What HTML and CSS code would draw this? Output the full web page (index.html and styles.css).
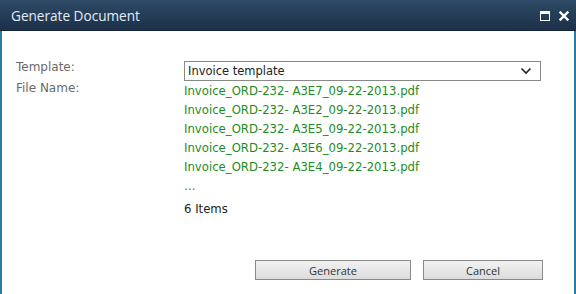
FILE: index.html
```html
<!DOCTYPE html>
<html lang="en">
<head>
  <meta charset="UTF-8" />
  <title>Generate Document</title>
  <link rel="stylesheet" href="styles.css">
</head>
<body>
  <div class="dialog">
    <header class="titlebar">
      <h1>Generate Document</h1>
      <div class="controls">
        <span class="maximize"></span>
        <svg class="close" width="10" height="10" viewBox="0 0 10 10">
          <path d="M1.5 1.5 L8.5 8.5 M8.5 1.5 L1.5 8.5" stroke="#fff" stroke-width="2.4" stroke-linecap="square" />
        </svg>
      </div>
    </header>

    <div class="content">
      <div class="form">
        <div class="label">Template:</div>
        <div class="field">
          <div class="select">
            <span>Invoice template</span>
            <svg width="12" height="8" viewBox="0 0 12 8">
              <path d="M1.5 1.5 L6 6 L10.5 1.5" fill="none" stroke="#222" stroke-width="1.6" />
            </svg>
          </div>
        </div>

        <div class="label">File Name:</div>
        <div class="field">
          <ul class="files">
            <li>Invoice_ORD-232- A3E7_09-22-2013.pdf</li>
            <li>Invoice_ORD-232- A3E2_09-22-2013.pdf</li>
            <li>Invoice_ORD-232- A3E5_09-22-2013.pdf</li>
            <li>Invoice_ORD-232- A3E6_09-22-2013.pdf</li>
            <li>Invoice_ORD-232- A3E4_09-22-2013.pdf</li>
          </ul>
          <div class="more">...</div>
          <div class="count">6 Items</div>
        </div>
      </div>

      <div class="actions">
        <button class="btn generate">Generate</button>
        <button class="btn cancel">Cancel</button>
      </div>
    </div>
  </div>
</body>
</html>
```

FILE: styles.css
```css
body {
  margin: 0;
  font-family: "DejaVu Sans", Verdana, sans-serif;
  background: #fff;
}

.dialog {
  width: 576px;
  height: 294px;
  box-sizing: border-box;
  border-left: 2px solid #2a7aa6;
  border-right: 2px solid #2a7aa6;
  display: flex;
  flex-direction: column;
}

.titlebar {
  height: 30px;
  margin: 0 -2px;
  background: linear-gradient(#2e4a66, #1c3048);
  display: flex;
  align-items: center;
  justify-content: space-between;
  padding: 0 7px 0 11px;
  border-bottom: 1px solid #16263a;
}

.titlebar h1 {
  margin: 0;
  font-family: "Open Sans", "Noto Sans", sans-serif;
  font-size: 13.6px;
  font-weight: normal;
  color: #e4ecf4;
}

.controls {
  display: flex;
  align-items: center;
  gap: 9px;
  margin-top: 1px;
}

.maximize {
  width: 8px;
  height: 6px;
  border: 1.5px solid #fff;
  border-top-width: 3px;
}

.content {
  flex: 1;
  display: flex;
  flex-direction: column;
  padding: 30px 0 0 14px;
}

.form {
  display: grid;
  grid-template-columns: 168px 357px;
  row-gap: 1px;
}

.label {
  color: #6a6a6a;
  font-size: 12px;
  line-height: 19px;
  margin-top: -3px;
}

.select {
  height: 20px;
  box-sizing: border-box;
  border: 1px solid #888;
  display: flex;
  align-items: center;
  justify-content: space-between;
  padding: 0 8px 0 3px;
  font-size: 11.5px;
  color: #222;
}

.files {
  list-style: none;
  margin: 0;
  padding: 0;
  color: #1e8c1e;
  font-size: 11.7px;
}

.files li {
  line-height: 19px;
}

.more {
  color: #1e8c1e;
  font-size: 12px;
  line-height: 18px;
}

.count {
  margin-top: 7px;
  font-size: 11.7px;
  color: #222;
}

.actions {
  display: flex;
  gap: 12px;
  margin: auto 0 14px 239px;
}

.btn {
  height: 20px;
  border: 1px solid #8a8a8a;
  background: linear-gradient(#f2f2f2, #dcdcdc);
  font-family: "Open Sans", "Noto Sans", sans-serif;
  font-size: 11px;
  color: #333;
  padding: 0;
}

.generate {
  width: 156px;
}

.cancel {
  width: 120px;
}
```
